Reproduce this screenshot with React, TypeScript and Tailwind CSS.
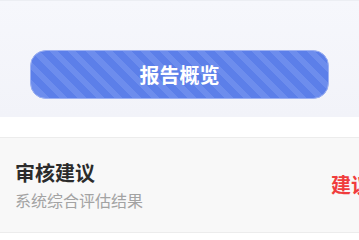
export default function App() {
  const font = { fontFamily: '"Noto Sans CJK SC", "Noto Sans", sans-serif' };

  return (
    <div className="w-[359px] h-[240px] overflow-hidden bg-white" style={font}>
      {/* report header band */}
      <div className="h-[117px] border-t border-[#eceef3] bg-gradient-to-b from-[#f6f7fc] to-[#f2f3f9] px-[30px] pt-[49px]">
        <div className="h-[49px] rounded-[16px] border border-[#9db1f2] bg-[#5c7fe9] bg-[repeating-linear-gradient(45deg,#5c7fe9_0px,#5c7fe9_7px,#6d8ded_7px,#6d8ded_13px)] flex items-center justify-center">
          <span className="text-[20px] font-bold text-white leading-none">报告概览</span>
        </div>
      </div>

      {/* review suggestion card */}
      <div className="mt-[20px] h-[96px] border-y border-[#ececec] bg-[#f8f8f8] flex items-center overflow-hidden">
        <div className="w-[331px] shrink-0 pl-[15px] flex flex-col">
          <span className="text-[20px] font-bold text-[#2b2b2b] leading-[28px]">审核建议</span>
          <span className="text-[16px] text-[#a3a3a3] leading-[22px] mt-[2px]">系统综合评估结果</span>
        </div>
        <span className="text-[20px] font-bold text-[#f03d3d] whitespace-nowrap leading-none">建议通过</span>
      </div>
    </div>
  );
}
